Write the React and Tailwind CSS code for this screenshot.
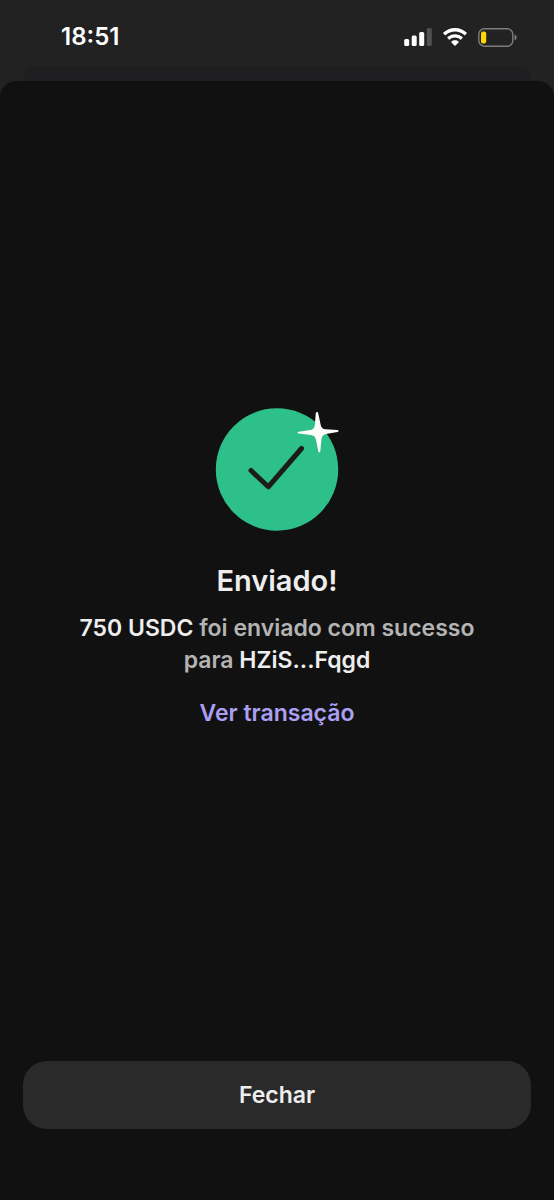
const SignalIcon = () => (
  <svg viewBox="0 0 28 18" className="h-[18px] w-7" aria-hidden="true">
    <rect x="0.200" y="11" width="5" height="7" rx="1.5" fill="#fff" />
    <rect x="7.700" y="7.6" width="5" height="10.4" rx="1.5" fill="#fff" />
    <rect x="15.200" y="4" width="5" height="14" rx="1.5" fill="#fff" />
    <rect x="22.800" y="0" width="5" height="18" rx="1.5" fill="#505050" />
  </svg>
);

const WifiIcon = () => (
  <svg viewBox="0 0 24 18" className="h-[18px] w-6" aria-hidden="true">
    <path
      d="M12 0C7.5 0 3.4 1.7.4 4.6c-.3.3-.3.7 0 1l1.4 1.4c.3.3.7.3 1 0C5.2 4.8 8.4 3.5 12 3.5s6.8 1.300 9.2 3.5c.3.3.7.3 1 0l1.4-1.4c.3-.3.3-.7 0-1C20.6 1.7 16.5 0 12 0z"
      fill="#fff"
    />
    <path
      d="M12 6.200c-2.900 0-5.500 1.100-7.500 2.900-.3.300-.3.700 0 1l1.500 1.400c.3.300.6.300.9 0C8.300 10.300 10 9.600 12 9.600s3.700.7 5.100 1.900c.3.300.6.300.9 0l1.500-1.400c.3-.3.3-.7 0-1-2-1.800-4.600-2.900-7.500-2.900z"
      fill="#fff"
    />
    <path
      d="M12 12.200c-1.400 0-2.600.5-3.500 1.300-.3.300-.3.600 0 .9l3 3.200c.3.300.7.300 1 0l3-3.200c.3-.3.3-.6 0-.9-.9-.8-2.100-1.300-3.500-1.300z"
      fill="#fff"
    />
  </svg>
);

const BatteryIcon = () => (
  <svg viewBox="0 0 39 19" className="h-[19px] w-[39px]" aria-hidden="true">
    <rect x="0.8" y="0.8" width="34" height="17.4" rx="5.4" fill="none" stroke="#7d7d7d" strokeWidth="1.4" />
    <rect x="3" y="3.5" width="5.2" height="12" rx="2" fill="#ffd60a" />
    <path d="M36.600 6.600c1.300.5 2 1.600 2 2.900s-.7 2.400-2 2.900z" fill="#868686" />
  </svg>
);

const SuccessIcon = () => (
  <svg viewBox="0 0 124 123" className="h-[123px] w-[124px]" aria-hidden="true">
    <circle cx="62" cy="61.5" r="61.2" fill="#2ec08b" />
    <path
      d="M36 62.500L53.300 78.800L86.500 40.500"
      fill="none"
      stroke="#1c1c1c"
      strokeWidth="5"
      strokeLinecap="round"
      strokeLinejoin="round"
    />
    <path
      d="M101.700 4c.9-.1 1.300.4 1.500 1.200l2.500 11.800c.5 2.700 2 4.200 4.800 4.300l11.800.7c1.700.2 1.800 1.500.2 1.900l-11.600 2c-2.600.6-4.200 2.300-4.400 5l-1.200 12.300c-.2 1.600-1.700 1.600-2 0l-2.400-11.600c-.6-3-2.300-4.500-5.200-4.700l-11.900-1.300c-1.600-.2-1.600-1.600 0-1.900l11.600-1.800c2.700-.5 4.200-2 4.400-4.700l1-11.900c.1-.8.300-1.200.9-1.300z"
      fill="#fffefa"
    />
  </svg>
);

const StatusBar = () => (
  <header className="flex h-[67px] items-center justify-between pb-2 pl-[61px] pr-[37px] pt-[15px]">
    <time className="text-2xl font-semibold leading-8 text-white">18:51</time>
    <div className="flex items-center gap-[11px]">
      <SignalIcon />
      <WifiIcon />
      <BatteryIcon />
    </div>
  </header>
);

const App = () => {
  return (
    <div className="flex min-h-screen flex-col bg-[#222222] font-['Inter',sans-serif]">
      <StatusBar />

      {/* Edge of the sheet underneath */}
      <div className="mx-[23px] h-[14px] rounded-t-xl bg-[#1e1e20]" />

      <main className="flex flex-1 flex-col rounded-t-2xl bg-[#111111] px-[23px] pb-[71px]">
        <section className="flex flex-1 flex-col items-center justify-center pb-[5px] text-center">
          <SuccessIcon />
          <h1 className="mt-[30px] text-[29px] font-semibold leading-10 text-[#eeeeee]">
            Enviado!
          </h1>
          <p className="mt-[11px] text-[23px] font-semibold leading-8 text-[#b4b4b4]">
            <span className="text-[#eeeeee]">750 USDC</span> foi enviado com sucesso
            <br />
            para <span className="text-[#eeeeee]">HZiS...Fqgd</span>
          </p>
          <a href="#transacao" className="mt-[21px] text-[23px] font-semibold leading-8 text-[#ab9ff2]">
            Ver transação
          </a>
        </section>

        <button
          type="button"
          className="h-[68px] w-full rounded-3xl bg-[#2a2a2a] text-[23px] font-semibold text-[#eeeeee]"
        >
          Fechar
        </button>
      </main>
    </div>
  );
};

export default App;
